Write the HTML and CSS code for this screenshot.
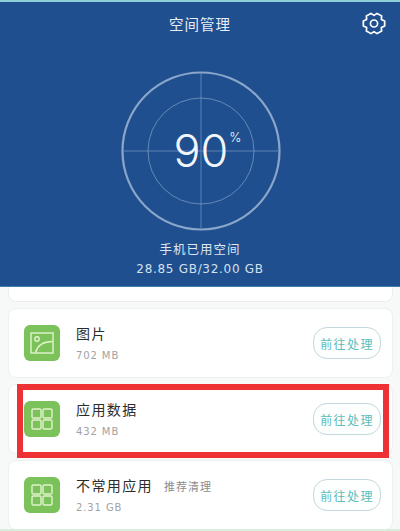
FILE: index.html
```html
<!DOCTYPE html>
<html lang="zh">
<head>
<meta charset="utf-8">
<title>空间管理</title>
<link rel="stylesheet" href="styles.css">
</head>
<body>
<div class="screen">
  <header class="hero">
    <div class="topbar">
      <h1 class="title">空间管理</h1>
      <svg class="gear" viewBox="0 0 24 24" preserveAspectRatio="none" fill="none" stroke="#fff" stroke-width="1.7" stroke-linejoin="round">
        <path d="M22.67 9.34V14.66L19.36 16.25 19.64 19.91 15.03 22.57 12 20.5 8.97 22.57 4.36 19.91 4.64 16.25 1.33 14.66V9.34L4.64 7.75 4.36 4.09 8.97 1.43 12 3.5 15.03 1.43 19.64 4.09 19.36 7.75Z"/>
        <circle cx="12" cy="12" r="3.6"/>
      </svg>
    </div>
    <div class="gauge">
      <svg class="dial" viewBox="0 0 160 160" fill="none" stroke="#6e90bc">
        <circle cx="80" cy="80" r="78.5" stroke-width="2.2" stroke="#8aa6ca"/>
        <circle cx="80" cy="80" r="53" stroke-width=".9"/>
        <path d="M80 2V158M2 80H158" stroke-width=".8"/>
      </svg>
      <div class="reading"><span class="num">90</span><span class="pct">%</span></div>
    </div>
    <p class="used-label">手机已用空间</p>
    <p class="used-value">28.85 GB/32.00 GB</p>
  </header>
  <main class="list">
    <div class="stub"></div>
    <section class="card">
      <div class="tile">
        <svg viewBox="0 0 24 24" fill="none" stroke="#e2f2cc" stroke-width="1.4">
          <rect x="1" y="2" width="22" height="20"/>
          <circle cx="7" cy="8" r="2.2"/>
          <path d="M5.5 21.5C7.5 14.5 13 10.5 22.5 10.5"/>
        </svg>
      </div>
      <div class="info">
        <div class="name-row"><span class="name">图片</span></div>
        <div class="size">702 MB</div>
      </div>
      <button class="go">前往处理</button>
    </section>
    <section class="card">
      <div class="tile">
        <svg viewBox="0 0 24 24" fill="none" stroke="#e2f2cc" stroke-width="1.4">
          <rect x="2" y="2" width="9" height="9" rx="1.2"/>
          <rect x="13" y="2" width="9" height="9" rx="1.2"/>
          <rect x="2" y="13" width="9" height="9" rx="1.2"/>
          <rect x="13" y="13" width="9" height="9" rx="1.2"/>
        </svg>
      </div>
      <div class="info">
        <div class="name-row"><span class="name">应用数据</span></div>
        <div class="size">432 MB</div>
      </div>
      <button class="go">前往处理</button>
      <div class="highlight"></div>
    </section>
    <section class="card">
      <div class="tile">
        <svg viewBox="0 0 24 24" fill="none" stroke="#e2f2cc" stroke-width="1.4">
          <rect x="2" y="2" width="9" height="9" rx="1.2"/>
          <rect x="13" y="2" width="9" height="9" rx="1.2"/>
          <rect x="2" y="13" width="9" height="9" rx="1.2"/>
          <rect x="13" y="13" width="9" height="9" rx="1.2"/>
        </svg>
      </div>
      <div class="info">
        <div class="name-row"><span class="name">不常用应用</span><span class="hint">推荐清理</span></div>
        <div class="size">2.31 GB</div>
      </div>
      <button class="go">前往处理</button>
    </section>
  </main>
</div>
</body>
</html>
```
FILE: styles.css
```css
* { box-sizing: border-box; }
html, body { margin: 0; padding: 0; }
body {
  width: 400px;
  height: 531px;
  overflow: hidden;
  background: #f7f8f8;
  font-family: "Noto Sans CJK SC", "Liberation Sans", sans-serif;
}
.screen {
  height: 531px;
  overflow: hidden;
  border-top: 2px solid #8fd0d8;
  border-bottom: 2px solid #d8eeda;
}
.hero {
  height: 285px;
  background: #1f4f8f;
  color: #e8eef6;
  display: flex;
  flex-direction: column;
  align-items: center;
  border-bottom: 1px solid #3f7fa8;
}
.topbar {
  position: relative;
  width: 100%;
  height: 46px;
  display: flex;
  justify-content: center;
  padding-top: 12px;
}
.title {
  margin: 0;
  font-size: 14.5px;
  line-height: 20px;
  font-weight: 400;
  letter-spacing: 1px;
  color: #e6edf5;
}
.gear {
  position: absolute;
  top: 10px;
  right: 14px;
  width: 24px;
  height: 23px;
}
.gauge {
  display: grid;
  width: 160px;
  height: 160px;
  margin-top: 23px;
  margin-left: 2px;
  place-items: center;
}
.dial { grid-area: 1 / 1; width: 160px; height: 160px; }
.reading {
  grid-area: 1 / 1;
  display: flex;
  align-items: flex-start;
  color: #f2f6fb;
  font-family: "Inter", "Liberation Sans", sans-serif;
  font-weight: 300;
  margin-left: 13px;
}
.num { font-size: 45px; line-height: 46px; }
.pct { font-size: 13px; line-height: 18px; margin-left: 1px; }
.used-label {
  margin: 9px 0 0;
  font-size: 12.5px;
  line-height: 18px;
  letter-spacing: 1px;
  color: #dfe7f1;
}
.used-value {
  margin: 2px 0 0;
  font-family: "DejaVu Sans", "Liberation Sans", sans-serif;
  font-size: 12px;
  line-height: 18px;
  letter-spacing: .7px;
  color: #d5e0ee;
}
.list {
  padding: 0 7px 0 8px;
  display: flex;
  flex-direction: column;
  gap: 6px;
}
.stub {
  height: 15px;
  background: #fff;
  border: 1px solid #eceeee;
  border-top: 0;
  border-radius: 0 0 8px 8px;
}
.card {
  position: relative;
  height: 70px;
  flex: none;
  background: #fff;
  border: 1px solid #eef0f0;
  border-radius: 8px;
  display: flex;
  align-items: center;
  padding: 0 11px 0 15px;
}
.tile {
  width: 36px;
  height: 36px;
  border-radius: 6px;
  background: #7cc25a;
  display: flex;
  align-items: center;
  justify-content: center;
  flex: none;
}
.tile svg { width: 24px; height: 24px; }
.info { flex: 1; margin-left: 16px; }
.name-row { display: flex; align-items: baseline; }
.name {
  font-size: 14px;
  line-height: 20px;
  letter-spacing: 1.4px;
  color: #2c2c2c;
}
.hint {
  margin-left: 11px;
  font-size: 11px;
  color: #8d8d8d;
  letter-spacing: 1px;
}
.size {
  margin-top: 6px;
  font-family: "DejaVu Sans", "Liberation Sans", sans-serif;
  font-size: 10px;
  line-height: 14px;
  letter-spacing: .9px;
  color: #a2a2a2;
}
.go {
  width: 68px;
  height: 32px;
  padding: 0;
  border: 1px solid #c3d8da;
  border-radius: 14px;
  background: #fdfefe;
  color: #5cbcb8;
  font-family: inherit;
  font-size: 12px;
  letter-spacing: 1.4px;
  flex: none;
}
.highlight {
  position: absolute;
  left: 8px;
  right: 3px;
  top: -1px;
  bottom: -5px;
  border: 6px solid #ee3135;
  pointer-events: none;
}
```
